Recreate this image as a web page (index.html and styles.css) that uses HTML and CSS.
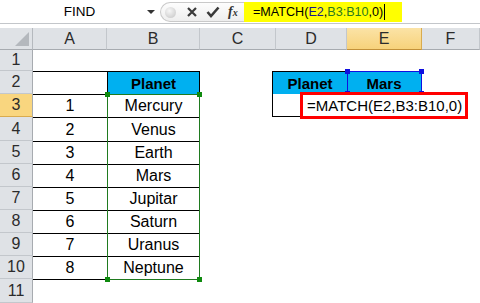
FILE: index.html
```html
<!DOCTYPE html>
<html lang="en">
<head>
  <meta charset="UTF-8" />
  <title>MATCH</title>
  <link rel="stylesheet" href="styles.css">
</head>
<body>

  <div class="formula-bar">
    <div class="name-box">
      <span class="name">FIND</span>
      <span class="drop"></span>
    </div>
    <div class="fx-buttons">
      <span class="grip"></span>
      <svg class="btn" width="12" height="12" viewBox="0 0 12 12">
        <path d="M2 2 L10 10 M10 2 L2 10" stroke="#3a3a3a" stroke-width="2.2" fill="none" />
      </svg>
      <svg class="btn" width="14" height="12" viewBox="0 0 14 12">
        <path d="M1.5 6 L5 10 L12.5 1.5" stroke="#3a3a3a" stroke-width="2.6" fill="none" />
      </svg>
      <span class="fx">f<small>x</small></span>
    </div>
    <div class="formula">
      <span class="formula-text">=MATCH(<span class="ref-blue">E2</span>,<span class="ref-green">B3:B10</span>,0)<span class="caret"></span></span>
    </div>
  </div>

  <div class="sheet">
    <!-- header row -->
    <div class="corner"><span class="tri"></span></div>
    <div class="ch">A</div>
    <div class="ch">B</div>
    <div class="ch">C</div>
    <div class="ch">D</div>
    <div class="ch active">E</div>
    <div class="ch">F</div>

    <!-- row 1 -->
    <div class="rh">1</div>
    <div class="c"></div><div class="c"></div><div class="c"></div><div class="c"></div><div class="c"></div><div class="c"></div>

    <!-- row 2 -->
    <div class="rh">2</div>
    <div class="c top"></div>
    <div class="c top head box">Planet</div>
    <div class="c"></div>
    <div class="c head mini left top">Planet</div>
    <div class="c head top right">Mars</div>
    <div class="c"></div>

    <!-- row 3 -->
    <div class="rh active">3</div>
    <div class="c top">1</div>
    <div class="c top">Mercury</div>
    <div class="c"></div>
    <div class="c mini left bottom"></div>
    <div class="c right bottom"></div>
    <div class="c"></div>

    <!-- row 4 -->
    <div class="rh">4</div>
    <div class="c top">2</div>
    <div class="c top">Venus</div>
    <div class="c"></div><div class="c"></div><div class="c"></div><div class="c"></div>

    <!-- row 5 -->
    <div class="rh">5</div>
    <div class="c top">3</div>
    <div class="c top">Earth</div>
    <div class="c"></div><div class="c"></div><div class="c"></div><div class="c"></div>

    <!-- row 6 -->
    <div class="rh">6</div>
    <div class="c top">4</div>
    <div class="c top">Mars</div>
    <div class="c"></div><div class="c"></div><div class="c"></div><div class="c"></div>

    <!-- row 7 -->
    <div class="rh">7</div>
    <div class="c top">5</div>
    <div class="c top">Jupitar</div>
    <div class="c"></div><div class="c"></div><div class="c"></div><div class="c"></div>

    <!-- row 8 -->
    <div class="rh">8</div>
    <div class="c top">6</div>
    <div class="c top">Saturn</div>
    <div class="c"></div><div class="c"></div><div class="c"></div><div class="c"></div>

    <!-- row 9 -->
    <div class="rh">9</div>
    <div class="c top">7</div>
    <div class="c top">Uranus</div>
    <div class="c"></div><div class="c"></div><div class="c"></div><div class="c"></div>

    <!-- row 10 -->
    <div class="rh">10</div>
    <div class="c top">8</div>
    <div class="c top">Neptune</div>
    <div class="c"></div><div class="c"></div><div class="c"></div><div class="c"></div>

    <!-- row 11 -->
    <div class="rh">11</div>
    <div class="c top"></div>
    <div class="c top"></div>
    <div class="c"></div><div class="c"></div><div class="c"></div><div class="c"></div>

    <!-- formula reference highlights, drawn over the cells -->
    <div class="range range-green"><i class="h tl"></i><i class="h tr"></i><i class="h bl"></i><i class="h br"></i></div>
    <div class="range range-blue"><i class="h tl"></i><i class="h tr"></i><i class="h bl"></i><i class="h br"></i></div>

    <!-- annotation -->
    <div class="callout">=MATCH(E2,B3:B10,0)</div>
  </div>

</body>
</html>
```

FILE: styles.css
```css
* {
  box-sizing: border-box;
}

body {
  margin: 0;
  width: 480px;
  height: 303px;
  overflow: hidden;
  background: white;
  font-family: 'Liberation Sans', Arial, sans-serif;
  color: #000;
}

/* formula bar */
.formula-bar {
  display: flex;
  height: 24px;
  border-bottom: 1px solid #c3c6ca;
  margin-bottom: 4px;
  padding-top: 2px;
}

.name-box {
  width: 160px;
  display: flex;
  align-items: center;
  padding-bottom: 2px;
}

.name {
  flex: 1;
  text-align: center;
  font-size: 13.5px;
  padding-left: 12px;
}

.drop {
  width: 0;
  height: 0;
  border-left: 4px solid transparent;
  border-right: 4px solid transparent;
  border-top: 4px solid #333;
  margin-right: 5px;
}

.fx-buttons {
  width: 84px;
  height: 20px;
  display: flex;
  align-items: center;
  border: 1px solid #c9c9c9;
  border-right: none;
  border-radius: 10px 0 0 10px;
  background: linear-gradient(#fdfdfd, #eeeeee);
  padding-left: 4px;
}

.grip {
  width: 11px;
  height: 11px;
  border-radius: 50%;
  background: radial-gradient(circle at 40% 35%, #f6f6f6, #c4c4c4);
  margin-right: 10px;
}

.btn {
  margin-right: 8px;
}

.fx {
  font-family: 'Liberation Serif', serif;
  font-style: italic;
  font-weight: bold;
  font-size: 14px;
  color: #333;
}

.fx small {
  font-size: 10px;
}

.formula {
  flex: 1;
  height: 20px;
  display: flex;
  align-items: center;
}

.formula-text {
  background: #ffff00;
  height: 20px;
  width: 158px;
  display: flex;
  align-items: center;
  padding-left: 9px;
  font-size: 12.6px;
  white-space: pre;
}

.ref-blue {
  color: #1a1a8c;
}

.ref-green {
  color: #2b7a1f;
}

.caret {
  width: 1px;
  height: 16px;
  background: #000;
  margin-left: 1px;
}

/* sheet grid */
.sheet {
  position: relative;
  display: grid;
  grid-template-columns: 33px 74px 93px 76px 71px 75px 58px;
  grid-template-rows: 22px 21px 23px 23px 24px 23px 23px 23px 23px 23px 23px 24px;
  font-size: 16px;
}

.corner {
  background: #dfe2e6;
  border-right: 1px solid #b5b9be;
  border-bottom: 1px solid #a7abb0;
  position: relative;
}

.tri {
  position: absolute;
  right: 3px;
  bottom: 3px;
  width: 0;
  height: 0;
  border-left: 14px solid transparent;
  border-bottom: 14px solid #b4b8bd;
}

.ch {
  background: #dfe2e6;
  border-right: 1px solid #c3c7cc;
  border-bottom: 1px solid #a7abb0;
  display: flex;
  align-items: center;
  justify-content: center;
  color: #2b2b2b;
}

.ch.active {
  background: linear-gradient(#fbe3a6, #f7d27b);
  border-right-color: #d9ab4e;
  border-bottom-color: #c2913a;
}

.rh {
  background: #dfe2e6;
  border-right: 1px solid #a7abb0;
  border-bottom: 1px solid #c3c7cc;
  display: flex;
  align-items: center;
  justify-content: center;
  color: #2b2b2b;
}

.rh.active {
  background: #f9d67f;
  border-bottom-color: #d9ab4e;
}

.c {
  display: flex;
  align-items: center;
  justify-content: center;
}

.c.top {
  border-top: 1px solid #000;
}

.head {
  background: #00b0f0;
  font-weight: bold;
  font-size: 15px;
}

.box {
  border-left: 1px solid #000;
  border-right: 1px solid #000;
}

.mini {
  margin-left: -4px;
}

.left {
  border-left: 1px solid #000;
}

.right {
  border-right: 1px solid #000;
}

.bottom {
  border-bottom: 1px solid #000;
}

/* reference ranges */
.range {
  position: absolute;
  pointer-events: none;
}

.range-green {
  left: 107px;
  top: 66px;
  width: 93px;
  height: 186px;
  border: 1px solid #1f7a1f;
}

.range-blue {
  left: 347px;
  top: 43px;
  width: 75px;
  height: 23px;
  border: 1px solid #1010e0;
}

.h {
  position: absolute;
  width: 5px;
  height: 5px;
}

.range-green .h {
  background: #0e8a0e;
}

.range-blue .h {
  background: #1010e0;
}

.tl { left: -3px; top: -3px; }
.tr { right: -3px; top: -3px; }
.bl { left: -3px; bottom: -3px; }
.br { right: -3px; bottom: -3px; }

/* red annotation box */
.callout {
  position: absolute;
  left: 300px;
  top: 64px;
  width: 168px;
  height: 27px;
  border: 3px solid #ff0000;
  background: white;
  font-size: 15px;
  padding-left: 4px;
  display: flex;
  align-items: center;
}
```
